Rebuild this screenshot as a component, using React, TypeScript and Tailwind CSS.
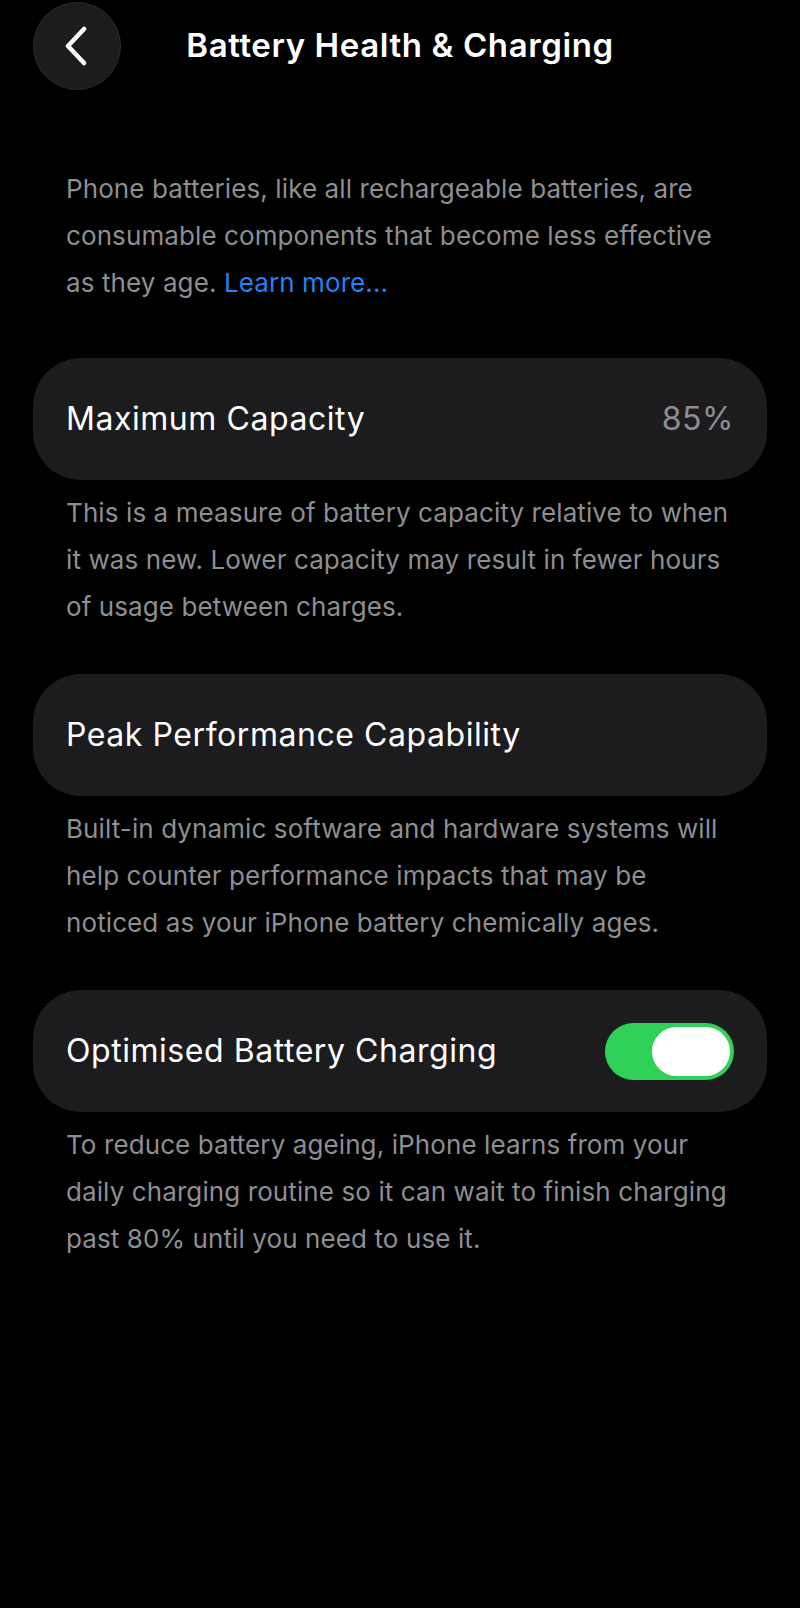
import { useState } from "react";

const sections = [
  {
    title: "Maximum Capacity",
    value: "85%",
    body: "This is a measure of battery capacity relative to when it was new. Lower capacity may result in fewer hours of usage between charges.",
  },
  {
    title: "Peak Performance Capability",
    body: "Built-in dynamic software and hardware systems will help counter performance impacts that may be noticed as your iPhone battery chemically ages.",
  },
  {
    title: "Optimised Battery Charging",
    toggle: true,
    body: "To reduce battery ageing, iPhone learns from your daily charging routine so it can wait to finish charging past 80% until you need to use it.",
  },
];

function BackButton() {
  return (
    <button className="h-[88px] w-[88px] rounded-full bg-[#1c1c1e] border border-[#2a2a2c] flex items-center justify-center">
      <svg width="30" height="40" viewBox="0 0 30 40" fill="none">
        <path
          d="M22 3 L6 20 L22 37"
          stroke="white"
          strokeWidth="4.5"
          strokeLinecap="round"
          strokeLinejoin="round"
        />
      </svg>
    </button>
  );
}

function Toggle({ on, onChange }: { on: boolean; onChange: () => void }) {
  return (
    <button
      onClick={onChange}
      className={`h-[57px] w-[129px] rounded-full p-[4px] flex items-center ${
        on ? "bg-[#2fd158] justify-end" : "bg-[#39393d] justify-start"
      }`}
    >
      <span className="h-[49px] w-[78px] rounded-full bg-white block" />
    </button>
  );
}

export default function App() {
  const [optimised, setOptimised] = useState(true);

  return (
    <div className="min-h-[1608px] w-[800px] bg-black text-white font-['Inter','Noto_Sans',sans-serif] px-[33px]">
      {/* Nav bar */}
      <header className="grid grid-cols-[88px_1fr_88px] items-center pt-[2px]">
        <BackButton />
        <h1 className="text-center text-[33px] font-semibold tracking-[0.6px] whitespace-nowrap">
          Battery Health &amp; Charging
        </h1>
        <div />
      </header>

      <p className="mt-[75px] pl-[33px] pr-[26px] text-[26px] leading-[47px] tracking-[0.1px] text-[#8e8e93]">
        Phone batteries, like all rechargeable batteries, are consumable
        components that become less effective as they age.{" "}
        <span className="text-[#1f84f5]">Learn more...</span>
      </p>

      <div className="mt-[52px] flex flex-col gap-[44px]">
        {sections.map((s) => (
          <section key={s.title}>
            <div className="h-[122px] rounded-[48px] bg-[#1c1c1e] pl-[33px] pr-[33px] flex items-center justify-between">
              <span className="text-[32px] tracking-[0.55px]">{s.title}</span>
              {s.value && (
                <span className="text-[32px] tracking-[0.55px] text-[#8e8e93]">{s.value}</span>
              )}
              {s.toggle && (
                <Toggle on={optimised} onChange={() => setOptimised(!optimised)} />
              )}
            </div>
            <p className="mt-[9px] pl-[33px] pr-[26px] text-[26px] leading-[47px] tracking-[0.1px] text-[#8e8e93]">
              {s.body}
            </p>
          </section>
        ))}
      </div>
    </div>
  );
}
